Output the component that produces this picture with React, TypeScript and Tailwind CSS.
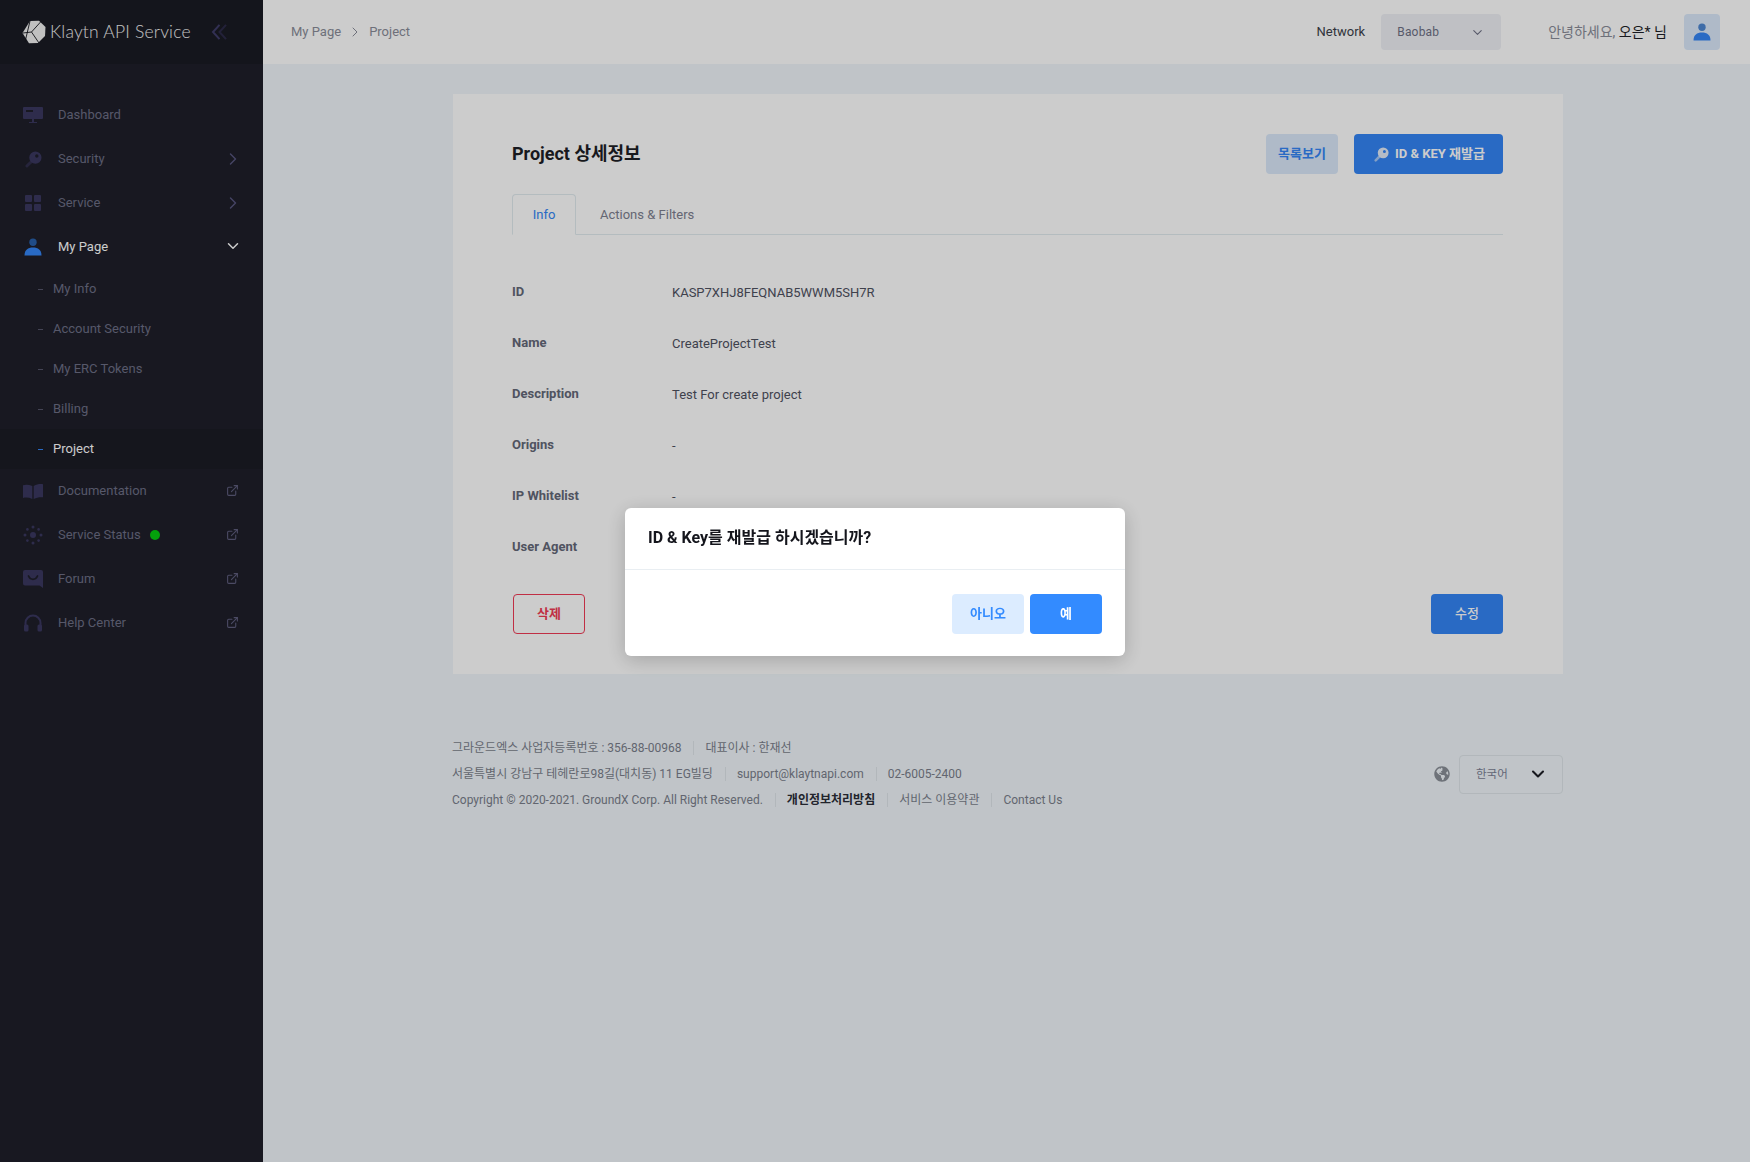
import { ChevronDown, ChevronRight, ExternalLink } from "lucide-react";
import { FaGlobeAmericas } from "react-icons/fa";
import type { ReactNode } from "react";

const font = { fontFamily: '"Roboto", "Noto Sans CJK KR", sans-serif' };

function KeyIcon({ className }: { className?: string }) {
    return (
        <svg viewBox="0 0 18 18" className={className} fill="currentColor">
            <path d="M7.500 10.500 2 16" fill="none" stroke="currentColor" strokeWidth="3" strokeLinecap="round" opacity="0.65" />
            <path fillRule="evenodd" d="M11 .5a6.500 6.500 0 1 1 0 13 6.500 6.500 0 0 1 0-13Zm1.500 3a1.800 1.800 0 1 0 0 3.600 1.800 1.800 0 0 0 0-3.600Z" />
        </svg>
    );
}

function PersonIcon({ className }: { className?: string }) {
    return (
        <svg viewBox="0 0 18 18" className={className}>
            <circle cx="9" cy="4.2" r="3.7" fill="#2a6fc9" opacity="0.8" />
            <path d="M0.5 17.5C0.5 12 4 9.6 9 9.6s8.5 2.4 8.5 7.9Z" fill="#3485f5" />
        </svg>
    );
}

function DashboardIcon() {
    return (
        <svg viewBox="0 0 20 18" className="h-[18px] w-[20px]" fill="currentColor">
            <path fillRule="evenodd" d="M1 1h18a1 1 0 0 1 1 1v10a1 1 0 0 1-1 1H1a1 1 0 0 1-1-1V2a1 1 0 0 1 1-1Zm2 3v2h7V4Z" />
            <path d="M9 13h2v3h3v1H6v-1h3Z" />
        </svg>
    );
}

function ServiceIcon() {
    return (
        <svg viewBox="0 0 16 16" className="h-[16px] w-[16px]" fill="currentColor">
            <rect x="0" y="0" width="7" height="7" rx="1" />
            <rect x="9" y="0" width="7" height="7" rx="1" />
            <rect x="0" y="9" width="7" height="7" rx="1" />
            <rect x="9" y="9" width="7" height="7" rx="1" />
        </svg>
    );
}

function BookIcon() {
    return (
        <svg viewBox="0 0 20 15" className="h-[15px] w-[20px]" fill="currentColor">
            <path d="M0 1.2c3-.9 6-.6 9.3.9V15C6 13.5 3 13.2 0 14Z" />
            <path d="M20 .3c-3-.5-6-.1-9.3 1.8V15c3.3-1.6 6.3-2.2 9.3-1.7Z" />
        </svg>
    );
}

function StatusIcon() {
    return (
        <svg viewBox="0 0 20 20" className="h-[20px] w-[20px]" fill="currentColor">
            <circle cx="10" cy="10" r="3" />
            <circle cx="10" cy="2" r="1.5" />
            <circle cx="10" cy="18" r="1.5" />
            <circle cx="2" cy="10" r="1.5" />
            <circle cx="18" cy="10" r="1.5" />
            <circle cx="4.4" cy="4.4" r="1.3" />
            <circle cx="15.6" cy="4.4" r="1.3" />
            <circle cx="4.4" cy="15.6" r="1.3" />
            <circle cx="15.6" cy="15.6" r="1.3" />
        </svg>
    );
}

function ForumIcon() {
    return (
        <svg viewBox="0 0 20 18" className="h-[18px] w-[20px]">
            <path d="M2 0h16a2 2 0 0 1 2 2v16l-3.5-2.5H2a2 2 0 0 1-2-2V2a2 2 0 0 1 2-2Z" fill="currentColor" />
            <path d="M5.5 6c1 2.3 2.6 3.3 4.5 3.3S13.500 8.300 14.500 6" fill="none" stroke="#1e1f2a" strokeWidth="1.800" strokeLinecap="round" />
        </svg>
    );
}

function HeadsetIcon() {
    return (
        <svg viewBox="0 0 18 18" className="h-[18px] w-[18px]" fill="currentColor">
            <path d="M1.500 12V9a7.500 7.500 0 0 1 15 0v3" fill="none" stroke="currentColor" strokeWidth="2" />
            <rect x="0" y="10.500" width="4.500" height="7" rx="1.500" />
            <rect x="13.500" y="10.500" width="4.500" height="7" rx="1.500" />
        </svg>
    );
}

function Logo() {
    return (
        <svg viewBox="0 0 24 24" className="h-[24px] w-[24px]">
            <path d="M8 1 17 .8 23.500 7 23 16 16 23 7 23.300 .5 13Z" fill="#f0f0f0" />
            <path d="M8 1 3 22M9.500 12 19 1.500M9.500 12 17 23M9.500 12 1 13" stroke="#14151c" strokeWidth="0.900" fill="none" />
        </svg>
    );
}

function CollapseIcon() {
    return (
        <svg viewBox="0 0 16 16" className="h-[16px] w-[16px]" fill="none" strokeWidth="2">
            <path d="M15 .8 8.500 8 15 15.200" stroke="#2c2a48" />
            <path d="M8.500 .8 2 8 8.500 15.200" stroke="#3f3c68" />
        </svg>
    );
}

function NavItem({ icon, label, trailing, active, dot }: { icon: ReactNode; label: string; trailing?: "right" | "down" | "link"; active?: boolean; dot?: boolean }) {
    return (
        <div className="flex h-[44px] items-center pl-[23px] pr-[21px]">
            <span className="flex w-[20px] items-center justify-center text-[#3a3760]">{icon}</span>
            <span className={active ? "ml-[15px] text-[13px] text-white" : "ml-[15px] text-[13px] text-[#6d6e85]"}>{label}</span>
            {dot && <span className="ml-[9px] h-[10px] w-[10px] rounded-full bg-[#05c90f]" />}
            <span className="ml-auto flex w-[18px] justify-center">
                {trailing === "right" && <ChevronRight className="-mt-px size-[20px] shrink-0 text-[#57557e]" strokeWidth={1.7} />}
                {trailing === "down" && <ChevronDown className="-mt-[2px] size-[18px] text-white" strokeWidth={2} />}
                {trailing === "link" && <ExternalLink className="-mt-[2px] mr-[2px] size-[13px] text-[#5f5e7e]" strokeWidth={2} />}
            </span>
        </div>
    );
}

function SubItem({ label, active }: { label: string; active?: boolean }) {
    return (
        <div className={active ? "flex h-[40px] items-center bg-[#1b1c25] pl-[38px]" : "flex h-[40px] items-center pl-[38px]"}>
            <span className={active ? "h-px w-[5px] bg-[#3485f5]" : "h-px w-[5px] bg-[#55566b]"} />
            <span className={active ? "ml-[10px] text-[13px] text-white" : "ml-[10px] text-[13px] text-[#6d6e85]"}>{label}</span>
        </div>
    );
}

function Sidebar() {
    return (
        <aside className="w-[263px] shrink-0 bg-[#1e1f2a]">
            <div className="flex h-[64px] items-center bg-[#1a1b24] pl-[22px]">
                <Logo />
                <span className="ml-[4px] text-[17.5px] font-light tracking-[0.2px] text-[#f2f2f2]" style={{ fontFamily: '"Lato", sans-serif' }}>Klaytn API Service</span>
                <span className="ml-[20px]"><CollapseIcon /></span>
            </div>
            <nav className="pt-[29px]">
                <NavItem icon={<DashboardIcon />} label="Dashboard" />
                <NavItem icon={<KeyIcon className="size-[17px]" />} label="Security" trailing="right" />
                <NavItem icon={<ServiceIcon />} label="Service" trailing="right" />
                <NavItem icon={<PersonIcon className="size-[18px]" />} label="My Page" trailing="down" active />
                <SubItem label="My Info" />
                <SubItem label="Account Security" />
                <SubItem label="My ERC Tokens" />
                <SubItem label="Billing" />
                <SubItem label="Project" active />
                <NavItem icon={<BookIcon />} label="Documentation" trailing="link" />
                <NavItem icon={<StatusIcon />} label="Service Status" trailing="link" dot />
                <NavItem icon={<ForumIcon />} label="Forum" trailing="link" />
                <NavItem icon={<HeadsetIcon />} label="Help Center" trailing="link" />
            </nav>
        </aside>
    );
}

function Header() {
    return (
        <header className="flex h-[64px] items-center bg-white pl-[28px] pr-[30px]">
            <span className="text-[13px] text-[#8a8d99]">My Page</span>
            <ChevronRight className="mx-[6px] size-[16px] text-[#8a8d99]" strokeWidth={1.5} />
            <span className="text-[13px] text-[#8a8d99]">Project</span>
            <span className="ml-auto text-[13px] text-[#3c3f4a]">Network</span>
            <div className="ml-[16px] flex h-[36px] w-[120px] items-center justify-between rounded-[4px] bg-[#eff1f6] pl-[16px] pr-[16px]">
                <span className="text-[12px] tracking-[0.2px] text-[#6e7085]">Baobab</span>
                <ChevronDown className="size-[15px] text-[#6e7085]" strokeWidth={1.75} />
            </div>
            <span className="ml-[47px] text-[14px] text-[#8a8d99]">
                안녕하세요, <span className="text-[#1d1e26]">오은* 님</span>
            </span>
            <div className="ml-[17px] flex size-[36px] items-center justify-center rounded-[4px] bg-[#dbe9fb]">
                <PersonIcon className="size-[18px]" />
            </div>
        </header>
    );
}

// User Agent's value sits behind the modal in the picture, so it stays empty
const rows = [
    ["ID", "KASP7XHJ8FEQNAB5WWM5SH7R"],
    ["Name", "CreateProjectTest"],
    ["Description", "Test For create project"],
    ["Origins", "-"],
    ["IP Whitelist", "-"],
    ["User Agent", ""],
];

function Card() {
    return (
        <section className="w-[1110px] bg-white pb-[40px] pl-[59px] pr-[60px] pt-[40px]">
            <div className="flex items-center justify-between">
                <h1 className="pb-[2px] text-[18px] font-bold text-[#1d1e26]">Project 상세정보</h1>
                <div className="flex gap-[16px]">
                    <button className="h-[40px] w-[72px] rounded-[4px] bg-[#dbe9fb] text-[13px] font-bold text-[#3485f5]">목록보기</button>
                    <button className="flex h-[40px] w-[149px] items-center justify-center gap-[6px] rounded-[4px] bg-[#3485f5] pl-[2px] text-[13px] font-bold text-white">
                        <KeyIcon className="size-[15px] text-[#e3ecf8]" />
                        ID &amp; KEY 재발급
                    </button>
                </div>
            </div>
            <div className="mt-[20px] flex h-[41px] border-b border-[#e2ebef]">
                <div className="flex h-[41px] w-[64px] items-center justify-center rounded-t-[4px] border border-b-white border-[#e2ebef] bg-white text-[13px] text-[#3485f5]">Info</div>
                <div className="ml-[24px] flex h-[40px] items-center pt-[2px] text-[13px] text-[#7d8090]">Actions &amp; Filters</div>
            </div>
            <dl className="pt-[31px]">
                {rows.map(([label, value]) => (
                    <div key={label} className="flex h-[51px] items-center">
                        <dt className="w-[160px] text-[13px] font-bold text-[#646878]">{label}</dt>
                        <dd className="pt-[2px] text-[13px] text-[#4f525f]">{value}</dd>
                    </div>
                ))}
            </dl>
            <div className="mt-[22px] flex justify-between pl-px">
                <button className="h-[40px] w-[72px] rounded-[4px] border border-[#f03a55] text-[13px] font-bold text-[#f03a55]">삭제</button>
                <button className="h-[40px] w-[72px] rounded-[4px] bg-[#3485f5] text-[13px] font-medium text-white">수정</button>
            </div>
        </section>
    );
}

function Sep() {
    return <span className="ml-[12px] mr-[11px] h-[14px] w-px bg-[#dfe5ea]" />;
}

function Footer() {
    return (
        <footer className="mt-[61px] flex w-[1110px] items-center justify-between">
            <div className="-ml-px text-[12px] text-[#7b7f8c]">
                <div className="flex h-[26px] items-center">
                    그라운드엑스 사업자등록번호 : 356-88-00968<Sep />대표이사 : 한재선
                </div>
                <div className="flex h-[26px] items-center">
                    서울특별시 강남구 테헤란로98길(대치동) 11 EG빌딩<Sep />support@klaytnapi.com<Sep />02-6005-2400
                </div>
                <div className="flex h-[26px] items-center">
                    Copyright © 2020-2021. GroundX Corp. All Right Reserved.<Sep />
                    <span className="font-bold text-[#2b2d38]">개인정보처리방침</span>
                    <Sep />서비스 이용약관<Sep />Contact Us
                </div>
            </div>
            <div className="flex items-center">
                <FaGlobeAmericas className="size-[16px] text-[#8a8f98]" />
                <div className="ml-[9px] flex h-[39px] w-[104px] items-center justify-between rounded-[4px] border border-[#dfe5ea] pl-[16px] pr-[14px]">
                    <span className="pt-px text-[11.5px] text-[#7b7f95]">한국어</span>
                    <ChevronDown className="size-[20px] text-[#1d1e26]" strokeWidth={2.5} />
                </div>
            </div>
        </footer>
    );
}

function Modal() {
    return (
        <div className="fixed inset-0 flex items-center justify-center bg-black/20 pt-[2px]">
            <div className="w-[500px] rounded-[6px] bg-white shadow-[0_4px_20px_rgba(0,0,0,0.2)]">
                <div className="flex h-[62px] items-center border-b border-[#e9eef2] px-[23px] pb-[2px] text-[16px] font-bold text-[#14151c]">ID &amp; Key를 재발급 하시겠습니까?</div>
                <div className="flex justify-end gap-[6px] px-[23px] pb-[22px] pt-[24px]">
                    <button className="h-[40px] w-[72px] rounded-[4px] bg-[#dcecff] text-[13px] font-bold text-[#338bff]">아니오</button>
                    <button className="h-[40px] w-[72px] rounded-[4px] bg-[#338bff] text-[13px] font-bold text-white">예</button>
                </div>
            </div>
        </div>
    );
}

export default function App() {
    return (
        <div className="flex min-h-screen bg-[#f0f6fa]" style={font}>
            <Sidebar />
            <div className="flex-1">
                <Header />
                <main className="pl-[190px] pt-[30px]">
                    <Card />
                    <Footer />
                </main>
            </div>
            <Modal />
        </div>
    );
}
